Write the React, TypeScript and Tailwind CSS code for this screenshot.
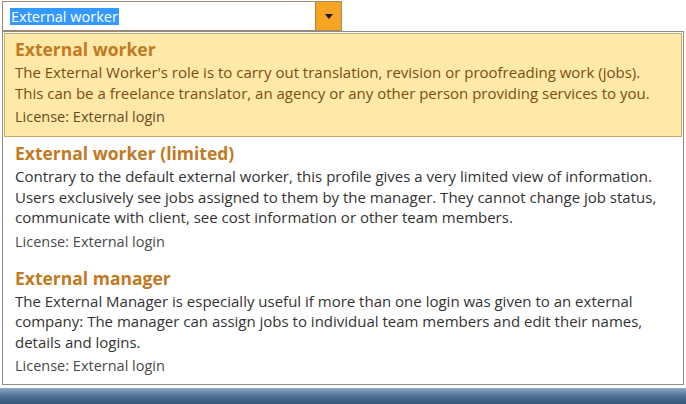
import { useState } from "react";

type Role = {
  id: string;
  title: string;
  lines: string[];
  license: string;
};

const roles: Role[] = [
  {
    id: "external",
    title: "External worker",
    lines: [
      "The External Worker's role is to carry out translation, revision or proofreading work (jobs).",
      "This can be a freelance translator, an agency or any other person providing services to you.",
    ],
    license: "License: External login",
  },
  {
    id: "limited",
    title: "External worker (limited)",
    lines: [
      "Contrary to the default external worker, this profile gives a very limited view of information.",
      "Users exclusively see jobs assigned to them by the manager. They cannot change job status,",
      "communicate with client, see cost information or other team members.",
    ],
    license: "License: External login",
  },
  {
    id: "manager",
    title: "External manager",
    lines: [
      "The External Manager is especially useful if more than one login was given to an external",
      "company: The manager can assign jobs to individual team members and edit their names,",
      "details and logins.",
    ],
    license: "License: External login",
  },
];

function RoleOption({ role, active }: { role: Role; active: boolean }) {
  return (
    <div
      className={
        active
          ? "border border-[#c9a86a] bg-[#fee9a8] px-[10px] pb-[9px] pt-[4px]"
          : "border border-transparent px-[10px] pb-[9px] pt-[4px]"
      }
    >
      <div className="text-[17.5px] font-bold leading-[22px] text-[#c27a22]">{role.title}</div>
      <div
        className={
          active
            ? "mt-[2px] whitespace-nowrap text-[15px] leading-[20.5px] text-[#7d4c12]"
            : "mt-[2px] whitespace-nowrap text-[15px] leading-[20.5px] text-[#333333]"
        }
      >
        {role.lines.map((line) => (
          <div key={line}>{line}</div>
        ))}
      </div>
      <div
        className={
          active
            ? "mt-[4px] text-[14.5px] leading-5 text-[#6b4a1e]"
            : "mt-[4px] text-[14.5px] leading-5 text-[#4a4a4a]"
        }
      >
        {role.license}
      </div>
    </div>
  );
}

export default function App() {
  const [selected] = useState("external");

  return (
    <div
      className="flex h-[404px] w-[686px] flex-col overflow-hidden bg-white"
      style={{ fontFamily: '"Open Sans", "Noto Sans", sans-serif' }}
    >
      {/* combo box */}
      <div className="ml-[2px] mt-[1px] flex h-[30px] w-[340px] border border-[#a4876a] bg-white">
        <div className="flex flex-1 items-center pl-[7px]">
          <span className="bg-[#3399ff] px-[1px] text-[14.5px] leading-[17px] text-white">External worker</span>
        </div>
        <div className="flex w-[26px] items-center justify-center border-l border-[#b5803a] bg-[#f7a423]">
          <svg width="8" height="5" viewBox="0 0 8 5">
            <path d="M0 0h8L4 5z" fill="#1a1a1a" />
          </svg>
        </div>
      </div>

      {/* drop-down list */}
      <div className="ml-[2px] flex h-[354px] w-[682px] flex-col border border-[#8c8c8c] bg-white p-px">
        {roles.map((role) => (
          <RoleOption key={role.id} role={role} active={role.id === selected} />
        ))}
      </div>

      {/* taskbar strip */}
      <div className="mt-[3px] h-[16px] w-full bg-gradient-to-b from-[#8fa9c4] via-[#4f7094] to-[#34557a]" />
    </div>
  );
}
